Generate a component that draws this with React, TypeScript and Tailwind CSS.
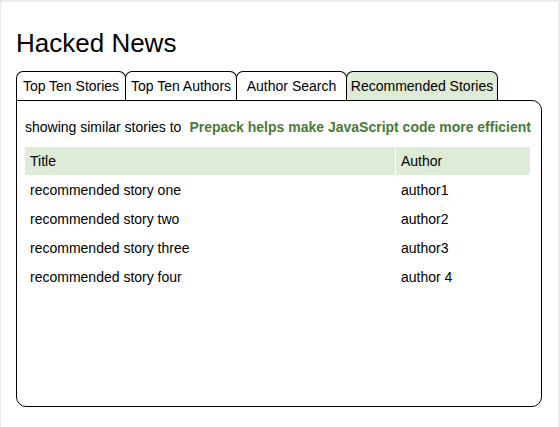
import React from "react";

const rows = [
  ["recommended story one", "author1"],
  ["recommended story two", "author2"],
  ["recommended story three", "author3"],
  ["recommended story four", "author 4"],
];

const tabs: [string, string][] = [
  ["Top Ten Stories", "w-[110px]"],
  ["Top Ten Authors", "w-[112px] -ml-px"],
  ["Author Search", "w-[111px] -ml-px"],
  ["Recommended Stories", "w-[152px] -ml-px bg-[#deebd6]"],
];

export default function App() {
  return (
    <div
      className="w-[560px] h-[427px] bg-white border-t-2 border-l border-r-2 border-[#ececec] pl-[15px] pr-[17px] pt-[26px] text-black"
      style={{ fontFamily: '"Liberation Sans", Arial, sans-serif' }}
    >
      <h1 className="text-[26px] leading-[30px] font-normal">Hacked News</h1>
      <div className="mt-[13px] flex h-[29px] items-end">
        {tabs.map(([t, cls]) => (
          <div
            key={t}
            className={`h-[29px] flex items-center justify-center border border-b-0 border-black rounded-t-[7px] text-[14px] ${cls}`}
          >
            {t}
          </div>
        ))}
      </div>
      <div className="w-[526px] h-[307px] border border-black rounded-b-[10px] rounded-tr-[10px] px-[8px] pt-[16px]">
        <div className="flex items-baseline text-[14px]">
          <span>showing similar stories to</span>
          <span className="ml-[8px] font-bold text-[#4a7a38]">
            Prepack helps make JavaScript code more efficient
          </span>
        </div>
        <div className="mt-[9px] w-[505px] text-[14px]">
          <div className="flex h-[28px] items-center">
            <div className="w-[370px] h-full flex items-center bg-[#deebd6] pl-[5px]">Title</div>
            <div className="ml-px flex-1 h-full flex items-center bg-[#deebd6] pl-[5px]">Author</div>
          </div>
          {rows.map(([a, b]) => (
            <div key={a} className="flex h-[28px] items-center mt-px">
              <div className="w-[370px] pl-[5px]">{a}</div>
              <div className="ml-px flex-1 pl-[5px]">{b}</div>
            </div>
          ))}
        </div>
      </div>
    </div>
  );
}
